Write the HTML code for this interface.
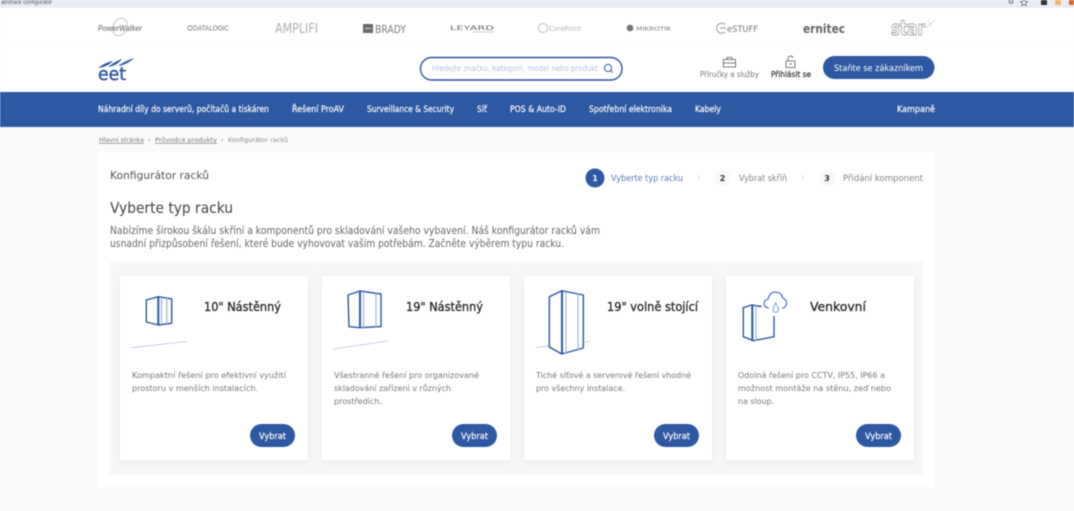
<!DOCTYPE html>
<html lang="cs">
<head>
<meta charset="utf-8">
<title>Konfigurátor racků</title>
<style>
html,body{margin:0;padding:0;width:1074px;height:511px;overflow:hidden;background:#fafafa}
svg{display:block;filter:blur(.4px)}
text{font-family:"DejaVu Sans","Liberation Sans",sans-serif;white-space:pre}
.lg{font-family:"Liberation Sans",Arial,sans-serif}
.nav{font-size:9px;fill:#fff;stroke:#fff;stroke-width:.18}
.bc{font-size:6.200px;fill:#777}
.desc{font-size:8.300px;fill:#7a7574}
.para{font-size:10.600px;fill:#666}
.title{font-size:12.500px;fill:#27262a;stroke:#27262a;stroke-width:.3}
.btn{font-size:8.800px;fill:#fff;stroke:#fff;stroke-width:.2}
.step{font-size:8.600px;fill:#808080}
.i{fill:#fff;stroke:#2f58a3;stroke-width:1.400;stroke-linejoin:round;stroke-linecap:round}
.c{fill:none;stroke:#2f58a3;stroke-width:2}
.l{fill:none;stroke:#9db4da;stroke-width:1.200;stroke-linecap:round}
.g{fill:none;stroke:#b9c6dc;stroke-width:.8}
</style>
</head>
<body>
<svg width="1074" height="511" viewBox="0 0 1074 511" xmlns="http://www.w3.org/2000/svg">
<defs>
<filter id="s" x="-10%" y="-10%" width="120%" height="120%"><feDropShadow dx="0" dy="2" stdDeviation="4" flood-color="#000" flood-opacity=".05"/></filter>
</defs>
<rect width="1074" height="511" fill="#fafafa"/>
<!-- browser strip -->
<rect width="1074" height="8" fill="#e9ecf4"/>
<text class="lg" x="1" y="4" font-size="6" fill="#555" textLength="51" lengthAdjust="spacingAndGlyphs">abstrack configurator</text>
<circle cx="1011" cy="1.500" r="1.800" fill="none" stroke="#666" stroke-width="1"/>
<path d="M1024 -1l1.200 2.400 2.400.3-1.800 1.600.5 2.400-2.300-1.200-2.300 1.200.5-2.400-1.800-1.600 2.400-.3z" fill="none" stroke="#777" stroke-width=".8"/>
<rect x="1041" y="0" width="6" height="5" fill="#333"/>
<rect x="1055" y="0" width="6" height="5" fill="#eeb765"/>
<rect x="1069" y="0" width="5" height="5" fill="#d9662f"/>
<!-- header -->
<rect y="8" width="1074" height="84" fill="#fff"/>
<line x1="0" y1="45" x2="1074" y2="45" stroke="#f8f8f8"/>
<!-- brand logos -->
<ellipse cx="120" cy="27" rx="7" ry="9" transform="rotate(25 120 27)" fill="none" stroke="#c5c5c5" stroke-width="1"/>
<text class="lg" x="98" y="31" font-size="8.500" font-style="italic" font-weight="700" fill="#8a8a8a" textLength="44" lengthAdjust="spacingAndGlyphs">PowerWalker</text>
<circle cx="190" cy="28" r="2.200" fill="none" stroke="#777" stroke-width=".8"/>
<text x="193" y="30.500" font-size="7" fill="#777" textLength="36" lengthAdjust="spacingAndGlyphs">DATALOGIC</text>
<text x="275" y="33" font-size="13.500" fill="#b0b0b0" textLength="43" lengthAdjust="spacingAndGlyphs">AMPLIFI</text>
<rect x="363" y="24" width="10" height="9" fill="#6a6a6a"/>
<line x1="365" y1="28.500" x2="371" y2="28.500" stroke="#ddd" stroke-width="1"/>
<text x="375" y="33" font-size="11" fill="#7c7c7c" textLength="31" lengthAdjust="spacingAndGlyphs">BRADY</text>
<text x="450" y="30" font-size="6.500" fill="#666" textLength="44" lengthAdjust="spacingAndGlyphs">LEYARD</text>
<line x1="473" y1="32" x2="494" y2="32" stroke="#bbb" stroke-width=".7"/>
<circle cx="543" cy="28" r="4.500" fill="none" stroke="#ccc" stroke-width="1.200"/>
<text x="549" y="31" font-size="7" fill="#b5b5b5" textLength="32" lengthAdjust="spacingAndGlyphs">CorePoint</text>
<circle cx="630" cy="28" r="3.400" fill="#777"/>
<text x="636" y="30.500" font-size="5.500" fill="#777" textLength="35" lengthAdjust="spacingAndGlyphs">MIKROTIK</text>
<path d="M725 24.500a5 5 0 1 0 0 7.500M720 28h6" fill="none" stroke="#aaa" stroke-width="1.200"/>
<text x="727" y="32" font-size="9" fill="#777" textLength="31" lengthAdjust="spacingAndGlyphs">eSTUFF</text>
<text x="803" y="33" font-size="12" font-weight="700" fill="#666" textLength="42" lengthAdjust="spacingAndGlyphs">ernitec</text>
<text x="891" y="35" font-size="20" font-weight="700" fill="#fff" stroke="#8e8e8e" stroke-width=".8" textLength="34" lengthAdjust="spacingAndGlyphs">star</text>
<path d="M926 28l9-8M928 21l4 6" stroke="#ddd" fill="none" stroke-width=".9"/>
<!-- EET logo -->
<path d="M98 68c4-3 9-6 15-7-3 3-7 6-15 7zM108 67c4-3 8-6 14-8-3 4-7 7-14 8zM118 66c4-3 10-6 16-8-4 4-9 7-16 8z" fill="#2f58a3"/>
<text x="98" y="80" font-size="17.500" fill="#2f58a3" stroke="#2f58a3" stroke-width=".4" textLength="28" lengthAdjust="spacingAndGlyphs">eet</text>
<!-- search -->
<rect x="420.500" y="57.500" width="201.500" height="22.500" rx="11.200" fill="#fff" stroke="#2f58a3" stroke-width="1.400"/>
<text x="432" y="71" font-size="7.500" fill="#b4c1da" textLength="166" lengthAdjust="spacingAndGlyphs">Hledejte značku, kategorii, model nebo produkt</text>
<circle cx="608" cy="68" r="3.600" fill="none" stroke="#2f58a3" stroke-width="1"/>
<line x1="610.800" y1="70.800" x2="612.600" y2="72.600" stroke="#2f58a3" stroke-width="1"/>
<!-- briefcase -->
<path d="M723.500 59.500h12v7.500h-12zM727 59.500v-2h5v2M723.500 63h12" fill="none" stroke="#555" stroke-width=".8"/>
<!-- lock -->
<path d="M786 61h9v6.500h-9zM788 61v-2.500a2.600 2.600 0 0 1 5 -.8" fill="none" stroke="#555" stroke-width=".8"/>
<circle cx="790.500" cy="64" r=".9" fill="#555"/>
<text x="700" y="77" font-size="7.800" fill="#707070" textLength="59" lengthAdjust="spacingAndGlyphs">Příručky a služby</text>
<text x="771" y="77" font-size="7.800" fill="#444" stroke="#444" stroke-width=".3" textLength="40" lengthAdjust="spacingAndGlyphs">Přihlásit se</text>
<rect x="823" y="56" width="111.500" height="23" rx="11.500" fill="#2f58a3"/>
<text x="834" y="71" font-size="9" fill="#fff" textLength="89" lengthAdjust="spacingAndGlyphs">Staňte se zákazníkem</text>
<!-- nav -->
<rect y="92" width="1074" height="35" fill="#2f58a3"/>
<text class="nav" x="98" y="112" textLength="171" lengthAdjust="spacingAndGlyphs">Náhradní díly do serverů, počítačů a tiskáren</text>
<text class="nav" x="292" y="112" textLength="52" lengthAdjust="spacingAndGlyphs">Řešení ProAV</text>
<text class="nav" x="367" y="112" textLength="87" lengthAdjust="spacingAndGlyphs">Surveillance &amp; Security</text>
<text class="nav" x="477" y="112" textLength="10" lengthAdjust="spacingAndGlyphs">Síť</text>
<text class="nav" x="510" y="112" textLength="56" lengthAdjust="spacingAndGlyphs">POS &amp; Auto-ID</text>
<text class="nav" x="589" y="112" textLength="83" lengthAdjust="spacingAndGlyphs">Spotřební elektronika</text>
<text class="nav" x="695" y="112" textLength="26" lengthAdjust="spacingAndGlyphs">Kabely</text>
<text class="nav" x="897" y="112" textLength="38" lengthAdjust="spacingAndGlyphs">Kampaně</text>
<!-- breadcrumb -->
<text class="bc" x="99" y="142" text-decoration="underline" textLength="45" lengthAdjust="spacingAndGlyphs">Hlavní stránka</text>
<text class="bc" x="148" y="142">›</text>
<text class="bc" x="155" y="142" text-decoration="underline" textLength="62" lengthAdjust="spacingAndGlyphs">Průvodce produkty</text>
<text class="bc" x="221" y="142">›</text>
<text class="bc" x="228" y="142" style="fill:#8c8c8c" textLength="60" lengthAdjust="spacingAndGlyphs">Konfigurátor racků</text>
<!-- main panel -->
<rect x="98" y="152" width="837" height="335" fill="#fff"/>
<text x="110" y="179" font-size="10.500" fill="#555" textLength="99" lengthAdjust="spacingAndGlyphs">Konfigurátor racků</text>
<text x="110" y="213" font-size="15" fill="#444" textLength="123" lengthAdjust="spacingAndGlyphs">Vyberte typ racku</text>
<text class="para" x="110" y="234" textLength="490" lengthAdjust="spacingAndGlyphs">Nabízíme širokou škálu skříní a komponentů pro skladování vašeho vybavení. Náš konfigurátor racků vám</text>
<text class="para" x="110" y="247" textLength="454" lengthAdjust="spacingAndGlyphs">usnadní přizpůsobení řešení, které bude vyhovovat vašim potřebám. Začněte výběrem typu racku.</text>
<!-- stepper -->
<circle cx="595" cy="178" r="9.500" fill="#2f58a3"/>
<text x="595" y="181" font-size="8" font-weight="700" fill="#fff" text-anchor="middle">1</text>
<text class="step" x="611" y="181" style="fill:#5a78b4" textLength="72" lengthAdjust="spacingAndGlyphs">Vyberte typ racku</text>
<path d="M697 175l3 3-3 3M801 175l3 3-3 3" fill="none" stroke="#e2e2e2" stroke-width=".9"/>
<circle cx="722.500" cy="178" r="8" fill="#f8f8f8"/>
<text x="722.500" y="181" font-size="8" font-weight="700" fill="#333" text-anchor="middle">2</text>
<text class="step" x="739" y="181" textLength="48" lengthAdjust="spacingAndGlyphs">Vybrat skříň</text>
<circle cx="827" cy="178" r="8" fill="#f8f8f8"/>
<text x="827" y="181" font-size="8" font-weight="700" fill="#333" text-anchor="middle">3</text>
<text class="step" x="843" y="181" textLength="80" lengthAdjust="spacingAndGlyphs">Přidání komponent</text>
<!-- gray container -->
<rect x="110" y="262" width="813" height="213" fill="#f7f7f7"/>
<!-- cards -->
<g fill="#fff" filter="url(#s)">
<rect x="120" y="276" width="188" height="184"/>
<rect x="322" y="276" width="188" height="184"/>
<rect x="524" y="276" width="188" height="184"/>
<rect x="726" y="276" width="188" height="184"/>
</g>
<!-- icon 1 -->
<line class="g" x1="131.500" y1="347.700" x2="186.700" y2="341.500"/>
<path class="i" d="M146.300 300l12-3.300 13.400 2.300v24.300l-13.400 1.700-12-3z"/>
<path class="c" d="M158.300 296.700v28.300"/>
<path class="l" d="M161.500 298v26M166.700 298v25.500"/>
<!-- icon 2 -->
<line class="g" x1="333" y1="349" x2="388" y2="341"/>
<path class="i" d="M348 295l12-4 21 3v32.500l-21 1.200-11-1z"/>
<path class="c" d="M360 291v36.500"/>
<path class="l" d="M363.500 292v35M376 293.500v33"/>
<!-- icon 3 -->
<line class="g" x1="536.500" y1="347.300" x2="590" y2="341.500"/>
<path class="i" d="M549.300 296.700l12.400-6 21.600 4.300v53l-21.600 6-12.400-7z"/>
<path class="c" d="M562 291v63"/>
<path class="l" d="M566 292v61M578 294v55"/>
<!-- icon 4 -->
<path class="i" style="fill:none" d="M761 306.500l-9.300-1.500-8.400 2.700v29l10 4 20.700-4v-20"/>
<path class="c" d="M752.300 305v36"/>
<path class="l" d="M756 306v34"/>
<path class="i" style="fill:none;stroke-width:1" d="M768.500 308c-2.500-.5-4.500-2-4.500-4.500 0-2.500 1.800-4 4-4.300.7-4 3.500-7.200 7.500-7.200 3.800 0 6.400 2.500 7.200 6 2.300.5 3.800 2.700 3.800 5 0 2.600-1.600 4.500-4 5"/>
<path class="l" style="stroke:#7f9dd0;stroke-width:1" d="M775.700 303c-1.300 2.500-2.800 4.300-2.800 6.500a2.800 2.800 0 0 0 5.600 0c0-2.200-1.500-4-2.800-6.500z"/>
<!-- card titles -->
<text class="title" x="204" y="311" textLength="77" lengthAdjust="spacingAndGlyphs">10" Nástěnný</text>
<text class="title" x="406" y="311" textLength="77" lengthAdjust="spacingAndGlyphs">19" Nástěnný</text>
<text class="title" x="607" y="311" textLength="91" lengthAdjust="spacingAndGlyphs">19" volně stojící</text>
<text class="title" x="810" y="311" textLength="56" lengthAdjust="spacingAndGlyphs">Venkovní</text>
<!-- descriptions -->
<text class="desc" x="132" y="378" textLength="154" lengthAdjust="spacingAndGlyphs">Kompaktní řešení pro efektivní využití</text>
<text class="desc" x="132" y="391" textLength="126" lengthAdjust="spacingAndGlyphs">prostoru v menších instalacích.</text>
<text class="desc" x="334" y="378" textLength="145" lengthAdjust="spacingAndGlyphs">Všestranné řešení pro organizované</text>
<text class="desc" x="334" y="391" textLength="117" lengthAdjust="spacingAndGlyphs">skladování zařízení v různých</text>
<text class="desc" x="334" y="404" textLength="48" lengthAdjust="spacingAndGlyphs">prostředích.</text>
<text class="desc" x="536" y="378" textLength="155" lengthAdjust="spacingAndGlyphs">Tiché síťové a serverové řešení vhodné</text>
<text class="desc" x="536" y="391" textLength="89" lengthAdjust="spacingAndGlyphs">pro všechny instalace.</text>
<text class="desc" x="738" y="378" textLength="147" lengthAdjust="spacingAndGlyphs">Odolná řešení pro CCTV, IP55, IP66 a</text>
<text class="desc" x="738" y="391" textLength="153" lengthAdjust="spacingAndGlyphs">možnost montáže na stěnu, zeď nebo</text>
<text class="desc" x="738" y="404" textLength="36" lengthAdjust="spacingAndGlyphs">na sloup.</text>
<!-- buttons -->
<g fill="#2f58a3">
<rect x="250" y="424" width="45" height="23" rx="11.500"/>
<rect x="452" y="424" width="45" height="23" rx="11.500"/>
<rect x="654" y="424" width="45" height="23" rx="11.500"/>
<rect x="856" y="424" width="45" height="23" rx="11.500"/>
</g>
<text class="btn" x="259" y="439" textLength="27" lengthAdjust="spacingAndGlyphs">Vybrat</text>
<text class="btn" x="461" y="439" textLength="27" lengthAdjust="spacingAndGlyphs">Vybrat</text>
<text class="btn" x="663" y="439" textLength="27" lengthAdjust="spacingAndGlyphs">Vybrat</text>
<text class="btn" x="865" y="439" textLength="27" lengthAdjust="spacingAndGlyphs">Vybrat</text>
</svg>
</body>
</html>
